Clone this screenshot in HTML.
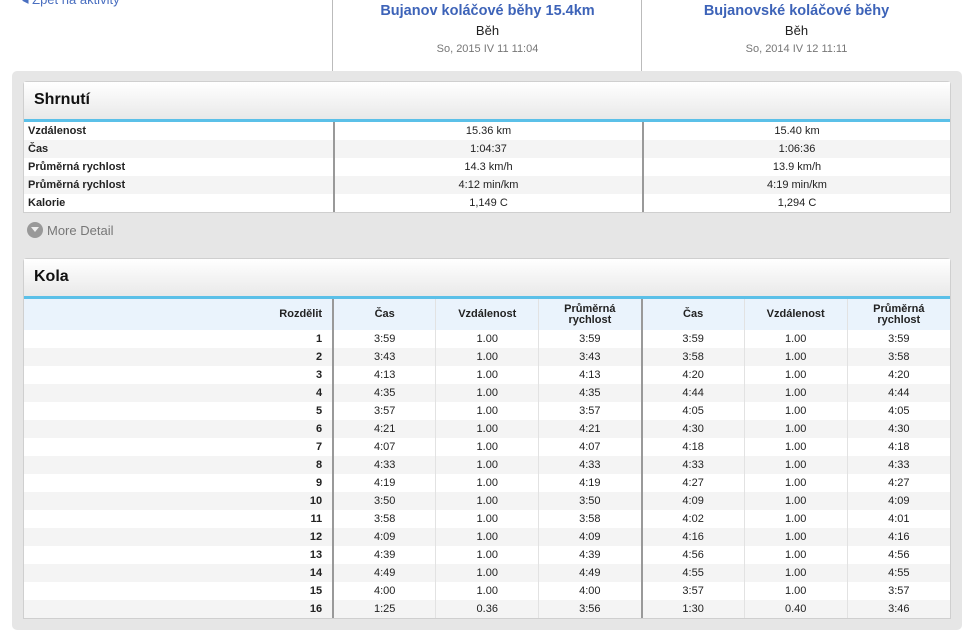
<!DOCTYPE html>
<html><head><meta charset="utf-8"><style>
*{margin:0;padding:0;box-sizing:border-box}
body{width:977px;height:644px;background:#fff;font-family:"Liberation Sans",Arial,sans-serif;position:relative;overflow:hidden;color:#222}
.abs{position:absolute}
.back{left:22px;top:-8px;color:#4a6fc0;font-size:13px}
.vl{position:absolute;top:0;height:71px;width:1px;background:#bbb}
.hc{position:absolute;top:0;width:309px;text-align:center}
.hc .t{color:#3d63b8;font-weight:bold;font-size:14.5px;margin-top:3px}
.hc .b{font-size:13px;margin-top:4px;color:#222}
.hc .d{font-size:11px;color:#777;margin-top:5px}
.box{left:12px;top:71px;width:950px;height:559px;background:#e6e6e6;border-radius:5px}
.panel{position:absolute;left:23px;width:928px;background:#fff;border:1px solid #cfcfcf;border-radius:4px 4px 0 0}
.ph{height:40px;background:linear-gradient(#fff,#e9e9e9);border-bottom:3px solid #5bc0e8;font-weight:bold;font-size:16px;padding:9px 0 0 10px;color:#111}
table{border-collapse:collapse;width:100%;font-size:11px}
td{height:18px;padding:0 4px;text-align:center}
tr:nth-child(even) td{background:#f4f4f4}
.sum td:first-child{text-align:left;font-weight:bold;width:310px}
.sum td:nth-child(2){border-left:2px solid #999;width:309px}
.sum td:nth-child(3){border-left:2px solid #999}
.laps td{border-left:1px solid #e2e2e2;width:103px}
.laps td:first-child{text-align:right;font-weight:bold;width:310px;border-left:none;padding-right:10px}
.laps td:nth-child(2),.laps td:nth-child(5){border-left:2px solid #999}
.laps tr.h td{height:31px;background:#eaf3fc;font-weight:bold;line-height:11px}
.laps tr:nth-child(odd):not(.h) td{background:#f4f4f4}
.laps tr:nth-child(even) td{background:#fff}
.md{left:27px;top:222px;font-size:13px;color:#777}
.md i{display:inline-block;width:16px;height:16px;border-radius:50%;background:#999;vertical-align:-3px;margin-right:4px;position:relative}
.md i:after{content:"";position:absolute;left:4px;top:5px;border-left:4px solid transparent;border-right:4px solid transparent;border-top:5px solid #eee}
</style></head><body>
<div class="abs back">◂ Zpět na aktivity</div>
<div class="vl" style="left:332px"></div><div class="vl" style="left:641px"></div>
<div class="hc" style="left:333px"><div class="t">Bujanov koláčové běhy 15.4km</div><div class="b">Běh</div><div class="d">So, 2015 IV 11 11:04</div></div>
<div class="hc" style="left:642px"><div class="t">Bujanovské koláčové běhy</div><div class="b">Běh</div><div class="d">So, 2014 IV 12 11:11</div></div>
<div class="abs box"></div>
<div class="panel" style="top:81px">
<div class="ph">Shrnutí</div>
<table class="sum">
<tr><td>Vzdálenost</td><td>15.36 km</td><td>15.40 km</td></tr>
<tr><td>Čas</td><td>1:04:37</td><td>1:06:36</td></tr>
<tr><td>Průměrná rychlost</td><td>14.3 km/h</td><td>13.9 km/h</td></tr>
<tr><td>Průměrná rychlost</td><td>4:12 min/km</td><td>4:19 min/km</td></tr>
<tr><td>Kalorie</td><td>1,149 C</td><td>1,294 C</td></tr>
</table></div>
<div class="abs md"><i></i>More Detail</div>
<div class="panel" style="top:258px">
<div class="ph">Kola</div>
<table class="laps">
<tr class="h"><td>Rozdělit</td><td>Čas</td><td>Vzdálenost</td><td>Průměrná<br>rychlost</td><td>Čas</td><td>Vzdálenost</td><td>Průměrná<br>rychlost</td></tr>
<tr><td>1</td><td>3:59</td><td>1.00</td><td>3:59</td><td>3:59</td><td>1.00</td><td>3:59</td></tr>
<tr><td>2</td><td>3:43</td><td>1.00</td><td>3:43</td><td>3:58</td><td>1.00</td><td>3:58</td></tr>
<tr><td>3</td><td>4:13</td><td>1.00</td><td>4:13</td><td>4:20</td><td>1.00</td><td>4:20</td></tr>
<tr><td>4</td><td>4:35</td><td>1.00</td><td>4:35</td><td>4:44</td><td>1.00</td><td>4:44</td></tr>
<tr><td>5</td><td>3:57</td><td>1.00</td><td>3:57</td><td>4:05</td><td>1.00</td><td>4:05</td></tr>
<tr><td>6</td><td>4:21</td><td>1.00</td><td>4:21</td><td>4:30</td><td>1.00</td><td>4:30</td></tr>
<tr><td>7</td><td>4:07</td><td>1.00</td><td>4:07</td><td>4:18</td><td>1.00</td><td>4:18</td></tr>
<tr><td>8</td><td>4:33</td><td>1.00</td><td>4:33</td><td>4:33</td><td>1.00</td><td>4:33</td></tr>
<tr><td>9</td><td>4:19</td><td>1.00</td><td>4:19</td><td>4:27</td><td>1.00</td><td>4:27</td></tr>
<tr><td>10</td><td>3:50</td><td>1.00</td><td>3:50</td><td>4:09</td><td>1.00</td><td>4:09</td></tr>
<tr><td>11</td><td>3:58</td><td>1.00</td><td>3:58</td><td>4:02</td><td>1.00</td><td>4:01</td></tr>
<tr><td>12</td><td>4:09</td><td>1.00</td><td>4:09</td><td>4:16</td><td>1.00</td><td>4:16</td></tr>
<tr><td>13</td><td>4:39</td><td>1.00</td><td>4:39</td><td>4:56</td><td>1.00</td><td>4:56</td></tr>
<tr><td>14</td><td>4:49</td><td>1.00</td><td>4:49</td><td>4:55</td><td>1.00</td><td>4:55</td></tr>
<tr><td>15</td><td>4:00</td><td>1.00</td><td>4:00</td><td>3:57</td><td>1.00</td><td>3:57</td></tr>
<tr><td>16</td><td>1:25</td><td>0.36</td><td>3:56</td><td>1:30</td><td>0.40</td><td>3:46</td></tr>
</table></div>
</body></html>
